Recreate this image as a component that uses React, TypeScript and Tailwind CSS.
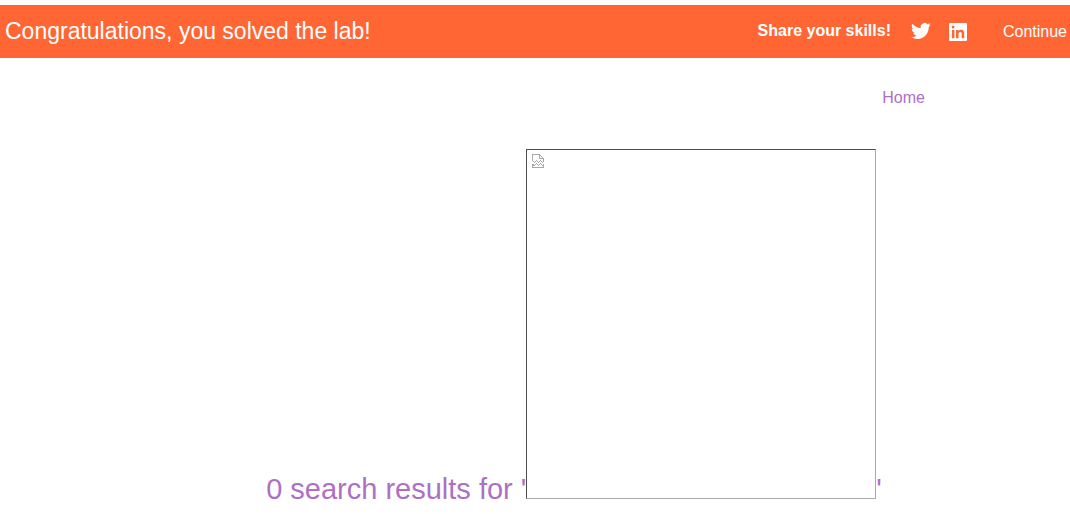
import React from "react";

function TwitterIcon() {
  return (
    <svg viewBox="0 0 24 24" className="size-5 fill-white" aria-hidden="true">
      <path d="M23.6 4.6a9.6 9.6 0 0 1-2.7.8 4.8 4.8 0 0 0 2.1-2.7 9.6 9.6 0 0 1-3.1 1.2 4.8 4.8 0 0 0-8.2 4.4A13.7 13.7 0 0 1 1.7 3.2a4.8 4.8 0 0 0 1.5 6.5 4.8 4.8 0 0 1-2.2-.6v.1a4.8 4.8 0 0 0 3.900 4.700 4.8 4.8 0 0 1-2.2.1 4.8 4.8 0 0 0 4.5 3.4A9.7 9.7 0 0 1 .1 19.4a13.7 13.7 0 0 0 7.4 2.2c8.9 0 13.8-7.4 13.8-13.8v-.6a9.8 9.8 0 0 0 2.3-2.6z" />
    </svg>
  );
}

function LinkedInIcon() {
  return (
    <svg viewBox="0 0 18 18" className="size-[18px]" aria-hidden="true">
      <rect width="18" height="18" rx="1" className="fill-white" />
      <g className="fill-[#ff6633]">
        <rect x="2.8" y="2.8" width="2.6" height="2.6" rx=".8" />
        <path d="M2.9 7h2.5v8.2H2.9zM7 7h2.4v1.1c.5-.8 1.4-1.3 2.5-1.3 2.5 0 3.3 1.5 3.3 3.8v4.6h-2.500v-4.100c0-1.2-.2-2.2-1.5-2.2s-1.7 1-1.7 2.2v4.1H7z" />
      </g>
    </svg>
  );
}

function BrokenImageIcon() {
  return (
    <svg
      viewBox="0 0 12 14"
      className="block h-[14px] w-3 fill-none stroke-[#a8a8a8]"
      shapeRendering="crispEdges"
      aria-hidden="true"
    >
      <path d="M.5 6.5v-6h7l4 4v3M7.5.5v4h4" />
      <path d="M.5 6.5l2 2 2-2 2 2 2-2 2 2 1-1M.5 13.5v-3l2 1 2-2 2 2 2-2 2 2 1-1v3z" />
    </svg>
  );
}

export default function App() {
  return (
    <div className="bg-white pt-[5px] font-['Liberation_Sans',Arial,sans-serif] text-base text-[#ad70c5]">
      <header className="flex h-[53px] items-center justify-between bg-[#ff6633] pr-[3px] pl-[5px] text-white">
        <p className="pb-0.5 text-[23px] leading-8">Congratulations, you solved the lab!</p>
        <div className="flex items-center">
          <span className="pb-0.5 font-bold">Share your skills!</span>
          <a href="#twitter" aria-label="Share on Twitter" className="ml-5 pb-0.5">
            <TwitterIcon />
          </a>
          <a href="#linkedin" aria-label="Share on LinkedIn" className="ml-[18px]">
            <LinkedInIcon />
          </a>
          <a href="#continue" className="ml-9">Continue</a>
        </div>
      </header>
      <main className="pt-7 pr-[145px] pl-[223px]">
        <nav className="flex justify-end">
          <a href="#home">Home</a>
        </nav>
        <h1 className="mt-[39px] text-center text-[29px] leading-8 whitespace-nowrap">
          0 search results for '
          <span
            role="img"
            aria-label="Search result"
            className="inline-block size-[350px] overflow-hidden border border-t-[#4d4d4d] border-r-[#aaaaaa] border-b-[#aaaaaa] border-l-[#4d4d4d] pt-1 pl-[5px] align-baseline"
          >
            <BrokenImageIcon />
          </span>
          '
        </h1>
      </main>
    </div>
  );
}
